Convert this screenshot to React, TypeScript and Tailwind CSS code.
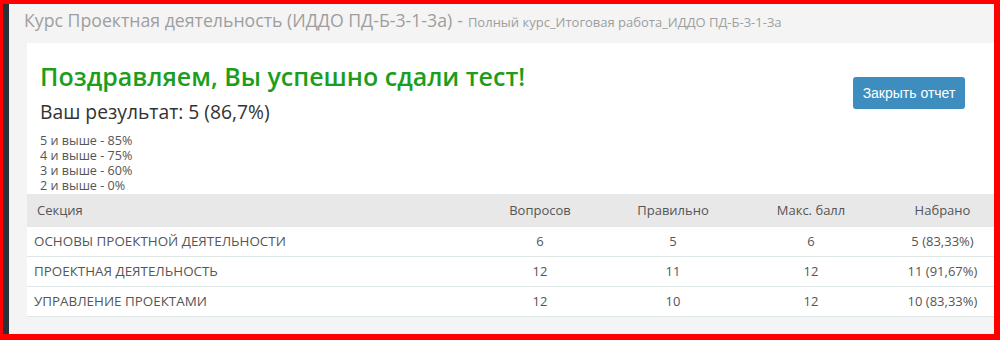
import React from "react";

const rows = [
  { name: "ОСНОВЫ ПРОЕКТНОЙ ДЕЯТЕЛЬНОСТИ", q: "6", c: "5", m: "6", s: "5 (83,33%)" },
  { name: "ПРОЕКТНАЯ ДЕЯТЕЛЬНОСТЬ", q: "12", c: "11", m: "12", s: "11 (91,67%)" },
  { name: "УПРАВЛЕНИЕ ПРОЕКТАМИ", q: "12", c: "10", m: "12", s: "10 (83,33%)" },
];

export default function App() {
  return (
    <div className="w-[1000px] h-[340px] flex overflow-hidden border-t-4 border-l-[3px] border-r-[6px] border-b-[6px] border-[#ff0000] font-['Open_Sans',sans-serif]">
      <div className="w-[6px] shrink-0 bg-[#263238]" />
      <div className="flex-1 bg-[#f4f4f4] flex flex-col min-w-0">
        <div className="h-[39px] pl-[15px] pt-[3px] flex items-baseline whitespace-nowrap text-[#9e9e9e]">
          <span className="text-[17.7px] leading-[26px]">Курс Проектная деятельность (ИДДО ПД-Б-3-1-3а)</span>
          <span className="text-[17.7px] leading-[26px] ml-[5px]">-</span>
          <span className="text-[13px] ml-[5px]">Полный курс_Итоговая работа_ИДДО ПД-Б-3-1-3а</span>
        </div>
        <div className="ml-[18px] bg-white">
          <div className="flex justify-between pl-[13px] pr-[29px] pt-[15px]">
            <div>
              <div className="text-[25px] leading-[36px] font-semibold text-[#1c9e1c]">Поздравляем, Вы успешно сдали тест!</div>
              <div className="text-[19.3px] leading-[26px] text-[#333] mt-[5px]">Ваш результат: 5 (86,7%)</div>
              <div className="text-[12.6px] leading-[15px] text-[#555] mt-[8px] mb-[1px]">
                <div>5 и выше - 85%</div>
                <div>4 и выше - 75%</div>
                <div>3 и выше - 60%</div>
                <div>2 и выше - 0%</div>
              </div>
            </div>
            <div className="pt-[19px]">
              <button className="w-[112px] h-[32px] rounded-[3px] bg-[#3d8dbf] text-white text-[14px] font-['Liberation_Sans',sans-serif]">
                Закрыть отчет
              </button>
            </div>
          </div>
          <div className="text-[13px] text-[#555]">
            <div className="grid grid-cols-[446px_134px_132px_144px_1fr] h-[33px] items-center bg-[#e8e8e8]">
              <div className="pl-[10px]">Секция</div>
              <div className="text-center">Вопросов</div>
              <div className="text-center">Правильно</div>
              <div className="text-center">Макс. балл</div>
              <div className="text-center pl-[8px]">Набрано</div>
            </div>
            {rows.map((r) => (
              <div key={r.name} className="grid grid-cols-[446px_134px_132px_144px_1fr] h-[30px] items-center border-b border-[#dde8e6]">
                <div className="pl-[7px] text-[13.4px]">{r.name}</div>
                <div className="text-center">{r.q}</div>
                <div className="text-center">{r.c}</div>
                <div className="text-center">{r.m}</div>
                <div className="text-center pl-[8px]">{r.s}</div>
              </div>
            ))}
          </div>
        </div>
      </div>
    </div>
  );
}
